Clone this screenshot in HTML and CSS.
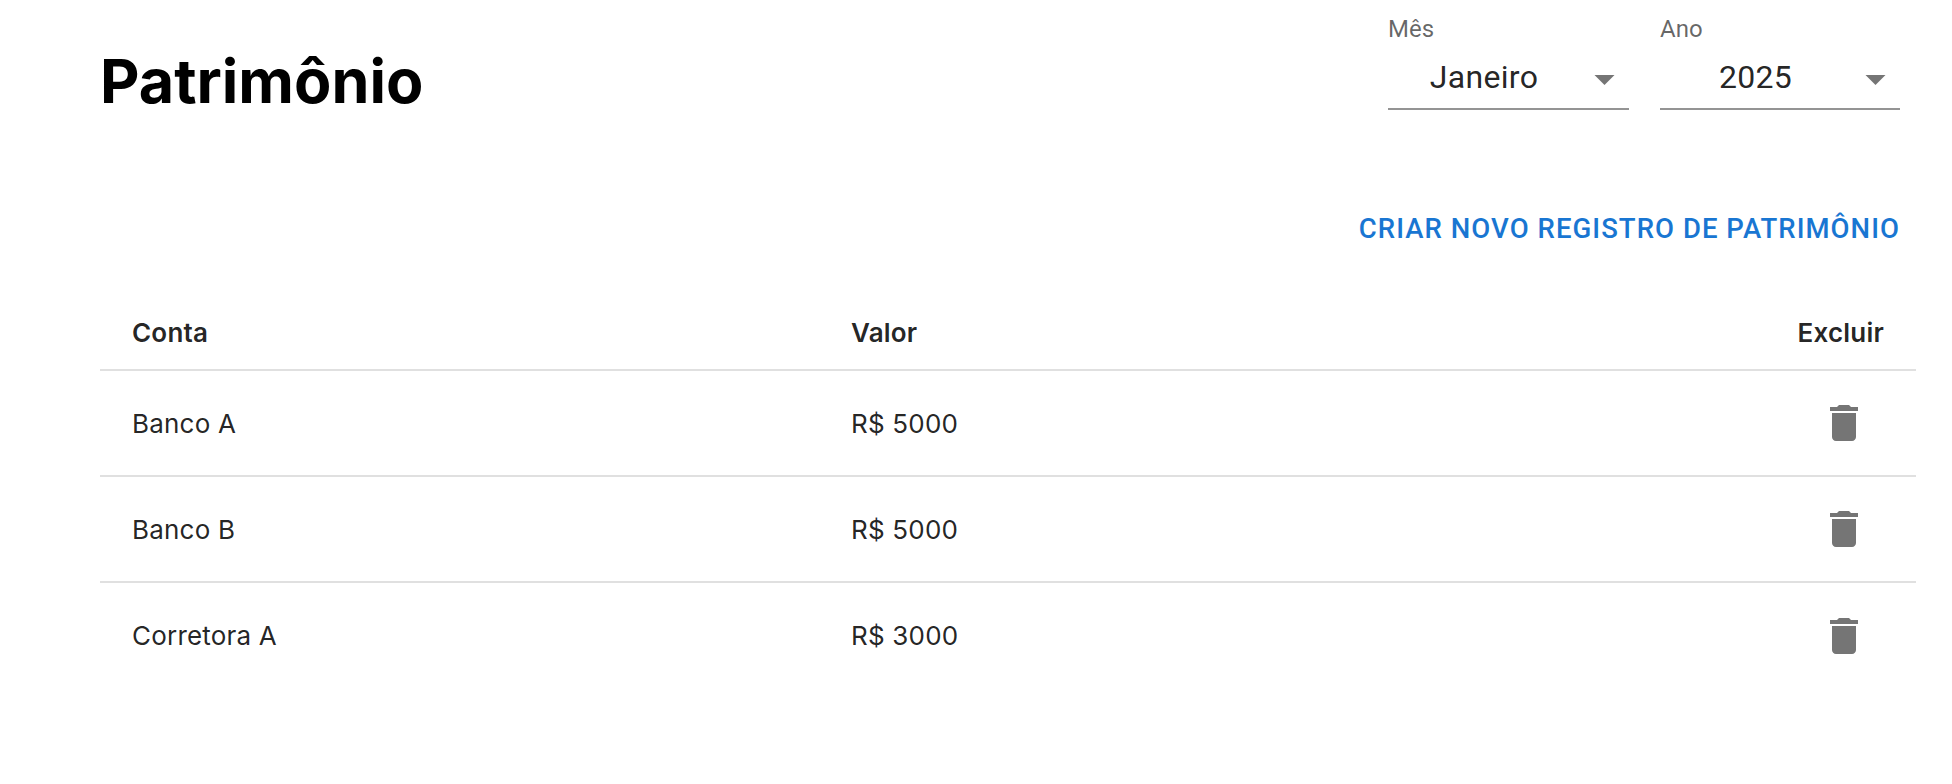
FILE: index.html
```html
<!DOCTYPE html>
<html lang="pt-BR">
<head>
<meta charset="utf-8">
<title>Patrimônio</title>
<link rel="stylesheet" href="styles.css">
</head>
<body>
<main class="page">
  <header class="top">
    <h1 class="title">Patrimônio</h1>
    <div class="filters">
      <div class="field">
        <span class="field-label">Mês</span>
        <div class="select">
          <span class="select-value">Janeiro</span>
          <svg class="caret" viewBox="0 0 20 10"><path d="M0 0h20L10 10z"/></svg>
        </div>
      </div>
      <div class="field">
        <span class="field-label">Ano</span>
        <div class="select">
          <span class="select-value">2025</span>
          <svg class="caret" viewBox="0 0 20 10"><path d="M0 0h20L10 10z"/></svg>
        </div>
      </div>
    </div>
  </header>
  <div class="actions"><a class="new-link">CRIAR NOVO REGISTRO DE PATRIMÔNIO</a></div>
  <table class="table">
    <thead>
      <tr><th class="col-conta">Conta</th><th class="col-valor">Valor</th><th class="col-excluir">Excluir</th></tr>
    </thead>
    <tbody>
      <tr><td>Banco A</td><td>R$ 5000</td><td class="cell-icon"><svg class="trash" viewBox="0 0 24 24"><path d="M6 19c0 1.1.9 2 2 2h8c1.1 0 2-.9 2-2V7H6v12zM19 4h-3.5l-1-1h-5l-1 1H5v2h14V4z"/></svg></td></tr>
      <tr><td>Banco B</td><td>R$ 5000</td><td class="cell-icon"><svg class="trash" viewBox="0 0 24 24"><path d="M6 19c0 1.1.9 2 2 2h8c1.1 0 2-.9 2-2V7H6v12zM19 4h-3.5l-1-1h-5l-1 1H5v2h14V4z"/></svg></td></tr>
      <tr class="last"><td>Corretora A</td><td>R$ 3000</td><td class="cell-icon"><svg class="trash" viewBox="0 0 24 24"><path d="M6 19c0 1.1.9 2 2 2h8c1.1 0 2-.9 2-2V7H6v12zM19 4h-3.5l-1-1h-5l-1 1H5v2h14V4z"/></svg></td></tr>
    </tbody>
  </table>
</main>
</body>
</html>
```

FILE: styles.css
```css
* { box-sizing: border-box; }
html, body { margin: 0; padding: 0; background: #fff; }
body { height: 784px; overflow: hidden; font-family: Inter, "Liberation Sans", sans-serif; color: rgba(0,0,0,.87); }
.page { padding: 0 36px 0 100px; }
.top { display: flex; justify-content: space-between; align-items: flex-start; padding-right: 16px; }
.title { margin: 46px 0 0; font-size: 61px; line-height: 70px; font-weight: 700; color: #000; }
.filters { display: flex; gap: 31px; padding-top: 16px; }
.field { width: 240px; display: flex; flex-direction: column; font-family: Roboto, sans-serif; }
.field:first-child { margin-left: -1px; width: 241px; }
.field-label { font-size: 24px; line-height: 26px; color: rgba(0,0,0,.6); }
.select { height: 60px; margin-top: 8px; padding: 0 14px 0 0; display: flex; align-items: center; border-bottom: 2px solid #949494; }
.select-value { flex: 1; text-align: center; font-size: 32px; letter-spacing: .3px; padding-right: 14px; padding-bottom: 4px; }
.caret { width: 21px; height: 10px; fill: #757575; margin-top: 1px; }
.actions { display: flex; justify-content: flex-end; padding: 0 16px 0 0; margin-top: 98px; }
.new-link { font-family: Roboto, sans-serif; font-size: 27.5px; line-height: 30px; font-weight: 500; letter-spacing: 1.05px; color: #1976d2; }
.table { width: 100%; margin-top: 52px; border-collapse: collapse; font-size: 26px; letter-spacing: .2px; }
th { font-weight: 600; text-align: left; height: 74px; padding: 0 0 0 32px; border-bottom: 2px solid #e0e0e0; }
td { height: 106px; padding: 0 0 0 32px; border-bottom: 2px solid #e0e0e0; }
.last td { border-bottom: 0; }
.col-conta { width: 719px; }
.col-excluir { text-align: right; padding-right: 32px; }
.cell-icon { text-align: right; padding-right: 48px; }
.trash { width: 48px; height: 48px; fill: #757575; display: inline-block; vertical-align: middle; }
```
